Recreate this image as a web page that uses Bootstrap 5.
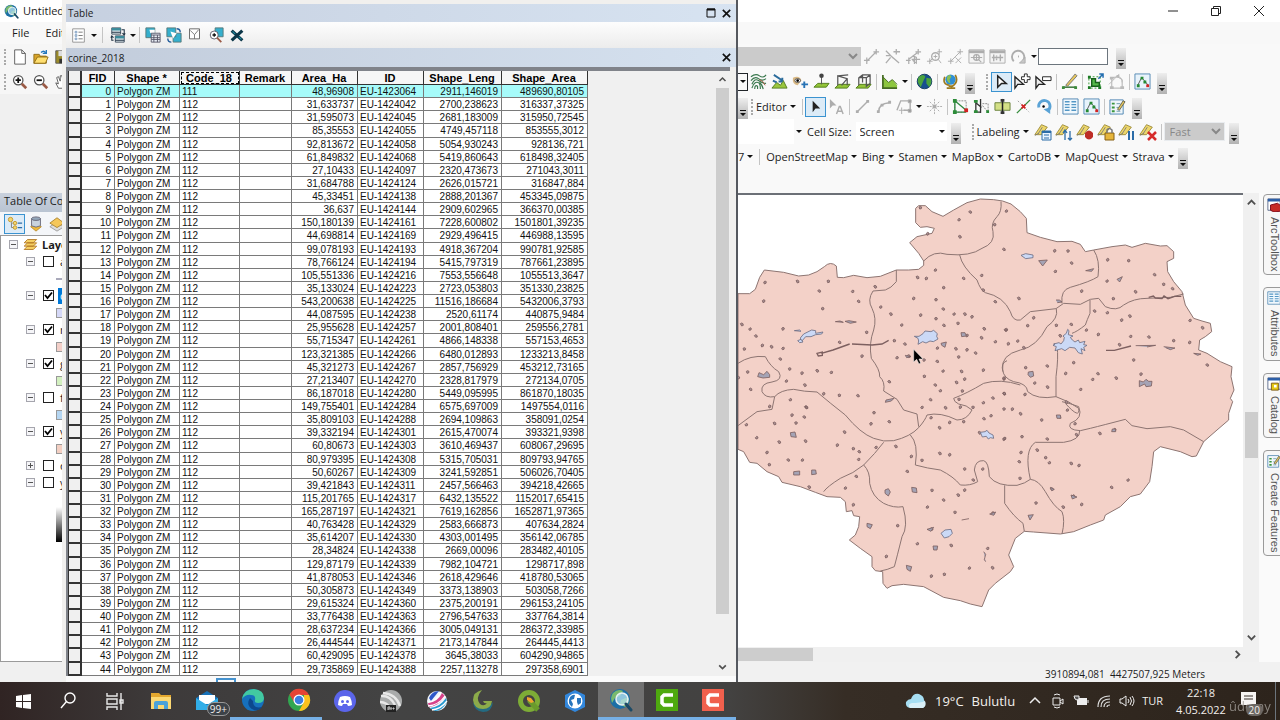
<!DOCTYPE html>
<html lang="en">
<head>
<meta charset="utf-8">
<meta name="viewport" content="width=device-width, initial-scale=1">
<title>Untitled - ArcMap</title>
<link href="https://cdn.jsdelivr.net/npm/bootstrap@5.3.0/dist/css/bootstrap.min.css" rel="stylesheet">
<style>
body{font-family:"Open Sans","Noto Sans",sans-serif;font-size:11px;line-height:16px;color:#1c1c1c;background:#f9f9f9;overflow:hidden}
button,input,select{font:inherit;color:inherit;border-radius:0}
button{background:none;border:0;padding:0}
a{color:inherit;text-decoration:none}
svg{display:block;flex:none}
.workspace{min-height:0}
.faded{opacity:.38;filter:grayscale(1)}
/* main window, left part */
.leftpane{width:62px;background:#f0f0f0}
.titlerow{height:22px;background:#fff}
.menurow{height:22px;background:#f8f8f8}
.leftbar{height:25px;background:#f6f6f6}
.blankbar{height:99px}
.toc-title{height:19px;background:linear-gradient(#c9d1dd,#b9c4d2)}
.toc-tools{height:23px;background:#f4f6f9}
.toc-tree{background:#fff;border:1px solid #9a9a9a;border-right:0;margin-bottom:20px}
.tree-row{height:17px}
.tree-row.child{padding-left:25px;gap:4px}
.fold{width:9px;height:9px;border:1px solid #a5a5ad;background:#f5f5f8;color:#555;display:grid;place-items:center;flex:none}
.tick{appearance:none;width:11px;height:11px;border:1px solid #222;background:#fff;margin:0 0 0 4px;flex:none}
.tick:checked{background:#fff url("data:image/svg+xml,%3Csvg xmlns='http://www.w3.org/2000/svg' viewBox='0 0 9 9'%3E%3Cpath d='M1 4l2.5 3L8 1.5' fill='none' stroke='%23000' stroke-width='1.8'/%3E%3C/svg%3E")}
.layer-name{padding-left:2px}
.layer-name.chosen{background:#0078d7;color:#fff}
.swatch-row{padding-left:55px}
.swatch{width:20px;height:10px;border:1px solid #999;flex:none}
.ramp{margin-left:55px;height:35px;width:20px;background:linear-gradient(#fff,#000)}
/* attribute table window */
.tablewin{width:676px;border-right:2px solid #55585e;padding:4px 0 0 4px;background:#f1f0ee}
.capbar{height:18px;background:linear-gradient(90deg,#c6d0e0,#d7e3f1);font-size:10px;padding:0 4px 0 2px}
.tabletools{height:26px;background:linear-gradient(#fdfdfd,#ececec);padding-left:2px}
.tabbar{height:19px;background:linear-gradient(90deg,#c2ccdb,#d5e1ef);font-size:10px;padding:0 4px 0 2px}
.gridbox{border:solid #80838a;border-width:4px 0 0 2px;margin-right:6px;background:#f0f0f0}
.gridfoot{height:6px;background:#fafafa}
.chip{width:20px;height:4px;border:2px solid #4592cf;border-bottom:0;margin-left:150px}
.attrs{border-collapse:separate;border-spacing:0;table-layout:fixed;width:520px;height:100%;font:10px/11px "Liberation Sans",Arial,sans-serif;color:#111;flex:none}
.attrs td,.attrs th{padding:1px 3px 0 2px;border:solid #7a7a7a;border-width:0 1px 1px 0;background:#fff;white-space:nowrap;overflow:hidden}
.attrs thead th{font-size:11px;line-height:12px;text-align:center;background:#f6f6f6;border-color:#333;color:#000}
.attrs .rowhead{background:#f0f0f0;border-color:#333;border-width:0 2px 2px 1px}
.attrs .numcell{text-align:right}
.attrs .current td{background:#a6fbfa}
.attrs .focused{outline:1px dashed #000;outline-offset:-2px}
.vscroll{width:16px;background:#f0f0f0;color:#555}
.thumb{background:#cdcdcd;width:13px}
.mapthumb{height:46px}
.above{flex:54}
.below{flex:46}
/* main window, right part */
.win-ctl{width:43px;display:grid;place-items:center}
.barrow{height:25px;white-space:nowrap}
.tl{width:21px;height:20px;display:grid;place-items:center;flex:none}
.tl.on{border:1px solid #3b93d0;background:#dcebf7}
.divider{width:1px;height:16px;background:#c4c4c4;margin:0 2px;flex:none}
.gripper{width:2px;height:16px;border-left:2px dotted #aaa;margin:0 3px;flex:none}
.more{width:10px;height:21px;background:linear-gradient(#eee,#b2b2b2);flex:none;display:flex;align-items:end;align-self:end;justify-content:center;padding-bottom:2px}
.caret{width:9px;height:16px;display:grid;place-items:center;flex:none}
.caret::after,.menulink::after{content:"";border:solid transparent;border-width:3px 3px 0;border-top-color:#111}
.menulink{display:flex;align-items:center;gap:3px}
.greybox{background:#cbcbcb;color:#888;height:19px}
.layerpick{width:123px}
.anglebox{width:70px;height:17px}
.rasterbox{width:56px}
.cellpick{appearance:none;width:82px;height:19px}
.fastpick{width:61px;padding-left:1px}
.basemaps{gap:5px}
.spacerbar{height:24px}
.mapframe{background:#fff;border-top:2px solid #6c7077}
.hscroll{height:15px;background:#f0f0f0}
.hthumb{width:75px;height:13px;background:#cdcdcd}
.status{height:20px;background:#f1f1f1;padding:3px 75px 0 0;font-size:10px}
.dock{width:21px;padding:1px 0 0 4px;gap:12px;background:#fafafa}
.docktab{writing-mode:vertical-rl;width:22px;border:1px solid #9a9a9a;border-radius:4px;font:11px/15px "Liberation Sans",Arial,sans-serif;color:#555;padding:3px 0;gap:5px;display:flex;align-items:center;background:#f7f7f7}
.docktab svg{width:14px;height:14px}
/* task bar */
.taskbar{height:38px;background:linear-gradient(90deg,#302423,#3d3a3a 12%,#434343 30%,#434241 57%,#362d25 66%,#2d241c);color:#f2efec}
.task{width:46px;display:grid;place-items:center;position:relative;flex:none}
.task svg{width:24px;height:24px}
.task.open{border-bottom:3px solid #76b0e6}
.task.active{background:#717171}
.count{position:absolute;right:0;bottom:4px;font-size:10px;line-height:12px;background:#3c4248;border:1px solid #999;border-radius:8px;padding:0 2px}
.weather{font-size:13px}
.traygap{width:23px;display:grid;place-items:center}
.traygap svg{width:16px;height:16px}
.clock{line-height:17px;width:52px}
.notice{width:48px;position:relative}
.watermark{position:absolute;left:2px;bottom:6px;font-size:13px;color:#a09b96;opacity:.8}
.bubble{position:absolute;right:12px;bottom:4px;font-size:10px;line-height:12px;background:#6c6762;border-radius:8px;padding:0 3px}
</style>
</head>
<body>
<svg width="0" height="0" class="position-absolute" aria-hidden="true">
<defs>
<symbol id="globe" viewBox="0 0 24 24"><circle cx="11" cy="11" r="10" fill="#1c6fa6"/><path d="M4 5q5-5 10-2l-3 5-5 2-3 5q-2-6 1-10zM12 12l7-3q2 6-3 10l-5-3z" fill="#79b96d"/><circle cx="13" cy="11" r="6" fill="#b6e2ef" fill-opacity=".75" stroke="#e6f0f2" stroke-width="1.6"/><path d="M17 16l5 6" stroke="#1b4a66" stroke-width="3" stroke-linecap="round"/></symbol>
<symbol id="page" viewBox="0 0 18 18"><path d="M3 1h8l4 4v12H3z" fill="#fff" stroke="#555"/><path d="M11 1v4h4" fill="none" stroke="#555"/></symbol>
<symbol id="folder" viewBox="0 0 18 18"><path d="M1 6h6l1 2h7v8H1z" fill="#d9a429" stroke="#8d6b15"/><path d="M1 16l4-7h12l-3 7z" fill="#ffdf70" stroke="#8d6b15"/><path d="M9 4q3-3 5 0M15 1v4h-4" fill="none" stroke="#2477bd" stroke-width="1.5"/></symbol>
<symbol id="disk" viewBox="0 0 18 18"><path d="M2 2h14v14H2z" fill="#9b8b2a" stroke="#555"/><path d="M5 2h8v6H5z" fill="#ddd"/><path d="M6 11h7v5H6z" fill="#333"/></symbol>
<symbol id="zin" viewBox="0 0 18 18"><circle cx="7" cy="7" r="5.3" fill="#fff" stroke="#555" stroke-width="1.4"/><path d="M4 7h6M7 4v6" stroke="#111" stroke-width="2"/><path d="M11 11l5 5" stroke="#9a5a46" stroke-width="3"/></symbol>
<symbol id="zout" viewBox="0 0 18 18"><circle cx="7" cy="7" r="5.3" fill="#fff" stroke="#555" stroke-width="1.4"/><path d="M4 7h6" stroke="#111" stroke-width="2"/><path d="M11 11l5 5" stroke="#9a5a46" stroke-width="3"/></symbol>
<symbol id="hand" viewBox="0 0 18 18"><path d="M5 16l-3-6 3 1-2-7 2-1 2 5 0-6 2 0 1 6 2-5 2 1-2 7v5z" fill="#fff" stroke="#555"/></symbol>
<symbol id="toc1" viewBox="0 0 18 18"><circle cx="4" cy="4" r="2.5" fill="#f4d46d" stroke="#c1962b"/><path d="M5 7v6h3M6 8h3" stroke="#777" fill="none"/><circle cx="9" cy="8" r="2" fill="#f4d46d" stroke="#c1962b"/><circle cx="9" cy="13" r="2" fill="#f4d46d" stroke="#c1962b"/><path d="M12 8h5M12 13h5" stroke="#2f6ea8" stroke-width="1.5"/></symbol>
<symbol id="toc2" viewBox="0 0 18 18"><path d="M3 12l6-3 6 3-6 5z" fill="#f0b93b" stroke="#b98a26"/><path d="M4 3v8q5 3 10 0V3z" fill="#c9d3de" stroke="#667"/><ellipse cx="9" cy="3" rx="5" ry="2" fill="#93a6ba" stroke="#667"/></symbol>
<symbol id="toc3" viewBox="0 0 18 18"><path d="M1 12l8-5 8 5-8 5z" fill="#ddd" stroke="#999"/><path d="M1 8l8-6 8 6-8 5z" fill="#f5c75a" stroke="#a9822d"/></symbol>
<symbol id="layers" viewBox="0 0 18 18"><path d="M2 15l4-4h11l-4 4zM2 11l4-4h11l-4 4zM2 7l4-4h11l-4 4z" fill="#f5cf63" stroke="#b0741f"/></symbol>
<symbol id="optlist" viewBox="0 0 18 18"><path d="M2 1h14v16H2z" fill="#fff" stroke="#888"/><path d="M5 4h2v2H5zM5 8h2v2H5zM5 12h2v2H5z" fill="none" stroke="#6f93bb"/><path d="M9 5h5M9 9h5M9 13h5" stroke="#666"/></symbol>
<symbol id="related" viewBox="0 0 18 18"><path d="M2 1h10v7H2zM6 10h10v7H6z" fill="#e5eef2" stroke="#345"/><path d="M2 1h10v3H2zM6 10h10v3H6z" fill="#3c8b9b"/><path d="M2 6h10M6 15h10M13 3h3v5M14 7l2 2 1-2M4 15H2v-5M1 12l1-2 2 2" stroke="#234" fill="none" stroke-width="1.2"/></symbol>
<symbol id="selattr" viewBox="0 0 18 18"><path d="M1 1h10v11H1z" fill="#35afcd" stroke="#577"/><path d="M5 3h6v4H6z" fill="#fff"/><path d="M7 7h10v10H7z" fill="#e9edf4" stroke="#556"/><path d="M7 9h10M7 12h10M7 14h10M10 9v8M14 9v8" stroke="#556"/></symbol>
<symbol id="switch" viewBox="0 0 18 18"><path d="M1 1h10v10H1zM8 7h9v10H8z" fill="#35afcd" stroke="#577"/><path d="M5 5l7 2-4 6z" fill="#fff"/><path d="M12 2q4 0 4 4M2 13q0 4 4 4" stroke="#245e9c" stroke-width="1.6" fill="none"/></symbol>
<symbol id="clearsel" viewBox="0 0 18 18"><path d="M3 1h12v12H3z" fill="#fff" stroke="#555"/><path d="M4 3l5 5 5-6M9 8v5" fill="none" stroke="#666"/></symbol>
<symbol id="zoomsel" viewBox="0 0 18 18"><path d="M8 1h9v10H8z" fill="#35afcd" stroke="#577"/><circle cx="7" cy="9" r="4.5" fill="#fff" stroke="#556"/><path d="M5 9h4M7 7v4" stroke="#111" stroke-width="1.5"/><path d="M10 12l5 5" stroke="#9a5a46" stroke-width="2"/></symbol>
<symbol id="delx" viewBox="0 0 18 18"><path d="M3 4l12 11M15 4L3 15" stroke="#0b3547" stroke-width="3.6"/><path d="M4 5l3 3M11 11l3 3" stroke="#1c8ca3" stroke-width="1.2"/></symbol>
<symbol id="x" viewBox="0 0 12 12"><path d="M2 2l8 8M10 2l-8 8" stroke="#111" stroke-width="1.8"/></symbol>
<symbol id="max" viewBox="0 0 12 12"><path d="M2 2h8v8H2z" fill="none" stroke="#111"/><path d="M2 2.5h8" stroke="#111" stroke-width="2"/></symbol>
<symbol id="vert" viewBox="0 0 18 18"><path d="M4 14L14 4M1 13h6M4 10v7M11 4h6M14 1v6" stroke="#333" stroke-width="1.3"/></symbol>
<symbol id="vertw" viewBox="0 0 18 18"><path d="M2 3l8 8M2 16l5-6M10 4h7M13 1v6M8 9l8 7M2 8h5" stroke="#333" stroke-width="1.4"/></symbol>
<symbol id="verth" viewBox="0 0 18 18"><path d="M1 13h5M4 10v7M11 4h6M14 1v6M4 12l9-7M8 8l4 2v6l-4-3M7 12h9M10 9v8" stroke="#333" stroke-width="1.3" fill="none"/></symbol>
<symbol id="vertz" viewBox="0 0 18 18"><path d="M1 14h6M4 11v6M12 4h5M14 1v6M4 14l3-3" stroke="#333"/><circle cx="10" cy="9" r="4" fill="none" stroke="#333" stroke-width="1.4"/><path d="M8 9h4M10 7v4M13 12l3 4" stroke="#333"/></symbol>
<symbol id="vertx" viewBox="0 0 18 18"><path d="M4 14L14 4M1 14h6M4 11v6M11 4h6M14 1v6M9 10l6 6M15 10l-6 6" stroke="#333"/></symbol>
<symbol id="winz" viewBox="0 0 18 18"><path d="M1 2h16v14H1z" fill="#eee" stroke="#333"/><path d="M1 4h16" stroke="#333" stroke-width="3"/><circle cx="9" cy="10" r="3" fill="none" stroke="#333" stroke-width="1.4"/><path d="M3 10h12M9 7v6M11 12l3 3" stroke="#333" stroke-width="1.2"/></symbol>
<symbol id="wint" viewBox="0 0 18 18"><path d="M1 2h16v14H1z" fill="#eee" stroke="#333"/><path d="M1 4h16" stroke="#333" stroke-width="3"/><path d="M3 10h12M5 7v7M12 7v7M8 8v1M8 11v2" stroke="#333" stroke-width="1.5"/></symbol>
<symbol id="rot" viewBox="0 0 18 18"><path d="M4 14A6.5 6.5 0 1 1 14 13" fill="none" stroke="#333" stroke-width="2"/><path d="M10 16h6v-6zM9 8v2" fill="#777" stroke="#333"/></symbol>
<symbol id="contour" viewBox="0 0 18 18"><path d="M1 4q5-4 9-1t7-1M1 8q4-5 8-2t8 0M2 12q3-7 7-4t8 3M2 16q3-9 8-5 1 2 1 6M14 17q-1-5-4-7M5 17q0-5 3-3v3" fill="none" stroke="#39784d" stroke-width="1.2"/><path d="M10 7q4 1 6 6" fill="none" stroke="#a4573e"/></symbol>
<symbol id="steep" viewBox="0 0 18 18"><path d="M1 16l5-6 4 3 3-5 4 8z" fill="#9ac63d" stroke="#567d22"/><path d="M3 2l9 6M12 9V5M12 9H8M2 8l4 2" stroke="#2b6c9c" stroke-width="2" fill="none"/></symbol>
<symbol id="sight" viewBox="0 0 18 18"><path d="M1 5q7-3 9 3l-4 5q-6-1-5-8z" fill="#d9b985"/><ellipse cx="6" cy="8" rx="3" ry="2" fill="#fff" stroke="#555"/><circle cx="6" cy="8" r="1.4"/><path d="M10 12h7M13 9v7" stroke="#2873b5" stroke-width="2"/></symbol>
<symbol id="pin3d" viewBox="0 0 18 18"><path d="M1 15l4-4h12l-3 4z" fill="#93c438" stroke="#507c18"/><path d="M9 3v9" stroke="#555"/><circle cx="9" cy="3" r="2.4" fill="#444"/></symbol>
<symbol id="line3d" viewBox="0 0 18 18"><path d="M1 16l4-4h12l-3 4z" fill="#93c438" stroke="#507c18"/><path d="M4 13V3l10 3v7M4 3l11-1M14 6L8 13" stroke="#555" fill="none" stroke-width="1.3"/></symbol>
<symbol id="poly3d" viewBox="0 0 18 18"><path d="M1 16l4-4h12l-3 4z" fill="#93c438" stroke="#507c18"/><path d="M4 13V5l4-3h8v9l-4 3V5l4-3M4 5h8M8 2v8" stroke="#555" fill="none" stroke-width="1.3"/></symbol>
<symbol id="chart" viewBox="0 0 18 18"><path d="M2 4l6 6 4-3 5 6v3H2z" fill="#8dc63f"/><path d="M2 2v14h15" stroke="#456b23" stroke-width="1.8" fill="none"/><path d="M2 4l6 6 4-3 5 5" stroke="#456b23" fill="none"/></symbol>
<symbol id="earth" viewBox="0 0 18 18"><circle cx="9" cy="9" r="7.7" fill="#17508e" stroke="#153a62"/><path d="M3 4q5-4 7 0l-2 4-3 7Q0 9 3 4zM11 5l5 1q1 5-2 9l-3-4z" fill="#4ba43e"/></symbol>
<symbol id="scene" viewBox="0 0 18 18"><circle cx="9" cy="7" r="5.5" fill="#2f8fd4"/><path d="M6 3q3-2 4 1L8 7l1 4Q3 9 6 3z" fill="#8cc152"/><path d="M14 2q4 7-3 12H7M10 13v3M5 16h9M3 4Q0 12 8 13" stroke="#9c7b20" fill="none" stroke-width="1.8"/></symbol>
<symbol id="arr" viewBox="0 0 18 18"><path d="M6 3v12l3-4 5 0z" fill="#222"/></symbol>
<symbol id="arrh" viewBox="0 0 18 18"><path d="M5 3v12l4-4 5 0z" fill="#fff" stroke="#222" stroke-width="1.6"/></symbol>
<symbol id="arrp" viewBox="0 0 18 18"><path d="M1 4v12l3-4 6 0z" fill="#eee" stroke="#222" stroke-width="1.4"/><path d="M11 1h3v3h3v3h-3v3h-3V7H8V4h3z" fill="#fff" stroke="#222"/></symbol>
<symbol id="arrm" viewBox="0 0 18 18"><path d="M1 4v12l3-4 6 0z" fill="#eee" stroke="#222" stroke-width="1.4"/><path d="M8 4h9v4H8z" fill="#fff" stroke="#222"/></symbol>
<symbol id="arra" viewBox="0 0 18 18"><path d="M2 1v10l3-3h4z" fill="#333"/><path d="M9 17l3-8h1l3 8M10 14h5" stroke="#333" stroke-width="1.5" fill="none"/></symbol>
<symbol id="pencil" viewBox="0 0 18 18"><path d="M2 15h14" stroke="#2c6d2c" stroke-width="1.5"/><path d="M5 13L15 1l2 2L7 14z" fill="#e7c75b" stroke="#777"/><path d="M1 14h3v3H1zM14 14h3v3h-3z" fill="#3c8c3c"/></symbol>
<symbol id="bbox" viewBox="0 0 18 18"><path d="M2 4h12v12H2z" fill="none" stroke="#393" stroke-dasharray="2"/><path d="M5 6h4v4h4v4H5z" fill="#54b948" stroke="#17611a" stroke-width="1.5"/><path d="M1 3h3v3H1zM12 14h3v3h-3zM1 14h3v3H1z" fill="#1d7b24"/><path d="M12 6l5-5M13 1h4v4" stroke="#236eb0" stroke-width="1.6" fill="none"/></symbol>
<symbol id="topo" viewBox="0 0 18 18"><path d="M4 5v11h11V7L10 4z" fill="none" stroke="#333"/><path d="M2 14h4v3H2zM13 14h4v3h-4zM2 4h4v3H2zM9 2h3v3H9z" fill="#555"/><path d="M1 12L12 1M10 4q5 0 5 6" stroke="#555" fill="none"/></symbol>
<symbol id="sketch" viewBox="0 0 18 18"><path d="M1 1h16v16H1z" fill="#e8f3fb" stroke="#568ab5"/><path d="M4 13L8 5l3 3 4 5" fill="none" stroke="#555"/><path d="M3 12h3v3H3zM7 4h3v3H7zM10 8h3v3h-3z" fill="#258a33"/><path d="M13 12h3v3h-3z" fill="#d32222"/></symbol>
<symbol id="seg" viewBox="0 0 18 18"><path d="M4 14L14 4" stroke="#333" stroke-width="1.5"/><path d="M2 13h3v3H2zM13 2h3v3h-3z" fill="#333"/></symbol>
<symbol id="arc" viewBox="0 0 18 18"><path d="M4 14q0-8 11-9" fill="none" stroke="#333" stroke-width="1.5"/><path d="M2 13h3v3H2zM6 6h3v3H6zM14 3h3v3h-3z" fill="#333"/></symbol>
<symbol id="polyp" viewBox="0 0 18 18"><path d="M1 13L5 3h10v10H8" fill="none" stroke="#333" stroke-width="1.5"/><path d="M6 10v7M3 13h7M13 2h3v3h-3zM13 12h3v3h-3z" stroke="#333"/></symbol>
<symbol id="burst" viewBox="0 0 18 18"><path d="M9 1v5M9 12v5M1 9h5M12 9h5M4 4l3 3M14 4l-3 3M4 14l3-3M14 14l-3-3" stroke="#333" stroke-dasharray="2 1"/><path d="M7 7h4v4H7z" fill="#333"/></symbol>
<symbol id="resh" viewBox="0 0 18 18"><path d="M3 3v12h12V3z" fill="none" stroke="#888" stroke-dasharray="2 1"/><path d="M3 3l12 10M3 3v12h12" stroke="#384" fill="none" stroke-width="1.4"/><path d="M1 1h4v4H1zM1 13h4v4H1z" fill="#2d8c39"/><path d="M13 11h4v4h-4z" fill="#d32222"/></symbol>
<symbol id="splitp" viewBox="0 0 18 18"><path d="M3 3v12h5M8 1v15M3 5l6 5" stroke="#333" fill="none" stroke-width="1.4"/><path d="M10 8l6 7M10 6h6v8" stroke="#888" stroke-dasharray="2 1" fill="none"/><path d="M1 2h4v3H1zM1 13h4v3H1zM14 13h3v3h-3z" fill="#2d8c39"/></symbol>
<symbol id="cut" viewBox="0 0 18 18"><path d="M1 5h16v8H1z" fill="#d4e086" stroke="#69813b"/><path d="M9 1v16" stroke="#222" stroke-width="1.6"/><path d="M7 1h4v3H7zM7 14h4v3H7z" fill="#333"/></symbol>
<symbol id="splitl" viewBox="0 0 18 18"><path d="M2 16L16 2" stroke="#368c3d" stroke-width="1.4"/><path d="M3 3l12 12" stroke="#999" stroke-dasharray="2"/><path d="M7 7l4 4M11 7l-4 4" stroke="#d32222" stroke-width="1.7"/></symbol>
<symbol id="rotb" viewBox="0 0 18 18"><path d="M3 10A6 6 0 1 1 13 13" fill="none" stroke="#5aa3d6" stroke-width="3"/><path d="M8 12l7 5 0-7z" fill="#5aa3d6"/><circle cx="8" cy="9" r="1.3"/></symbol>
<symbol id="attrt" viewBox="0 0 18 18"><path d="M1 1h16v16H1z" fill="#f1f8fd" stroke="#4f86b2"/><path d="M3 4h5M3 7h5M3 10h5M3 13h5M10 4h5M10 7h5M10 10h5M10 13h5" stroke="#5497c5" stroke-width="1.4"/></symbol>
<symbol id="cfeat" viewBox="0 0 18 18"><path d="M1 2h14v15H1z" fill="#f0f6fb" stroke="#4f86b2"/><path d="M3 5h3v2H3zM3 9h3v2H3zM3 13h3v2H3z" fill="#3a963d"/><path d="M8 6h4M8 10h2M8 14h4" stroke="#69a"/><path d="M9 12l6-9 2 1-6 9z" fill="#e7c75b" stroke="#665"/></symbol>
<symbol id="tag" viewBox="0 0 18 18"><path d="M1 14L9 2l7 3-7 9z" fill="#edd66a" stroke="#94822c"/><path d="M5 13l5-8M1 15l5-3" stroke="#777"/></symbol>
<symbol id="up" viewBox="0 0 12 12"><path d="M2 8l4-4 4 4" fill="none" stroke="#505050" stroke-width="2"/></symbol>
<symbol id="down" viewBox="0 0 12 12"><path d="M2 4l4 4 4-4" fill="none" stroke="#505050" stroke-width="2"/></symbol>
<symbol id="right" viewBox="0 0 12 12"><path d="M4 2l4 4-4 4" fill="none" stroke="#505050" stroke-width="2"/></symbol>
<symbol id="moreg" viewBox="0 0 8 8"><path d="M1 1h6v1H1zM1 4h6L4 7z" fill="#111"/></symbol>
</defs>
</svg>

<div class="vh-100 d-flex flex-column">
<div class="workspace flex-grow-1 d-flex">

<!-- left edge of the main window -->
<aside class="leftpane d-flex flex-column flex-shrink-0 overflow-hidden text-nowrap">
  <div class="titlerow d-flex align-items-center gap-1 ps-1 flex-shrink-0"><svg width="15" height="15"><use href="#globe"/></svg>Untitled</div>
  <nav class="menurow d-flex align-items-center gap-3 flex-shrink-0 ps-2"><a class="ms-1" href="#">File</a><a href="#">Edit</a></nav>
  <div class="leftbar d-flex align-items-center flex-shrink-0"><span class="gripper ms-1"></span><button class="tl" aria-label="New"><svg width="16" height="16"><use href="#page"/></svg></button><button class="tl" aria-label="Open"><svg width="16" height="16"><use href="#folder"/></svg></button><button class="tl" aria-label="Save"><svg width="16" height="16"><use href="#disk"/></svg></button></div>
  <div class="leftbar d-flex align-items-center flex-shrink-0"><span class="gripper ms-1"></span><button class="tl" aria-label="Zoom in"><svg width="16" height="16"><use href="#zin"/></svg></button><button class="tl" aria-label="Zoom out"><svg width="16" height="16"><use href="#zout"/></svg></button><button class="tl" aria-label="Pan"><svg width="16" height="16"><use href="#hand"/></svg></button></div>
  <div class="blankbar flex-shrink-0"></div>
  <div class="toc-title ps-1 flex-shrink-0">Table Of Contents</div>
  <div class="toc-tools d-flex align-items-center ps-1 flex-shrink-0"><button class="tl on" aria-label="List by drawing order"><svg width="16" height="16"><use href="#toc1"/></svg></button><button class="tl" aria-label="List by source"><svg width="16" height="16"><use href="#toc2"/></svg></button><button class="tl" aria-label="List by visibility"><svg width="16" height="16"><use href="#toc3"/></svg></button></div>
  <div class="toc-tree flex-grow-1" id="tree">
    <div class="tree-row d-flex align-items-center ps-2 gap-1"><button class="fold" aria-label="Collapse"><svg width="5" height="5"><path d="M0 2.5h5" stroke="currentColor"/></svg></button><svg width="16" height="15"><use href="#layers"/></svg><b>Layers</b></div>
  </div>
</aside>

<!-- attribute table -->
<section class="tablewin d-flex flex-column flex-shrink-0">
  <div class="capbar d-flex align-items-center flex-shrink-0"><span class="me-auto">Table</span><button class="me-1" aria-label="Maximize"><svg width="12" height="12"><use href="#max"/></svg></button><button aria-label="Close"><svg width="11" height="11"><use href="#x"/></svg></button></div>
  <div class="tabletools d-flex align-items-center flex-shrink-0">
    <button class="tl" aria-label="Table options"><svg width="15" height="15"><use href="#optlist"/></svg></button><span class="caret"></span><span class="divider mx-1"></span><button class="tl" aria-label="Related tables"><svg width="16" height="16"><use href="#related"/></svg></button><span class="caret"></span><span class="divider"></span>
    <button class="tl" aria-label="Select by attributes"><svg width="16" height="16"><use href="#selattr"/></svg></button><button class="tl" aria-label="Switch selection"><svg width="16" height="16"><use href="#switch"/></svg></button><button class="tl" aria-label="Clear selection"><svg width="15" height="15"><use href="#clearsel"/></svg></button><button class="tl" aria-label="Zoom to selected"><svg width="16" height="16"><use href="#zoomsel"/></svg></button><button class="tl" aria-label="Delete selected"><svg width="16" height="16"><use href="#delx"/></svg></button>
  </div>
  <div class="tabbar d-flex align-items-center flex-shrink-0"><span class="me-auto">corine_2018</span><button aria-label="Close tab"><svg width="11" height="11"><use href="#x"/></svg></button></div>
  <div class="gridbox flex-grow-1 d-flex">
    <table class="attrs">
      <colgroup><col width="14"><col width="33"><col width="65"><col width="60"><col width="52"><col width="66"><col width="66"><col width="78"><col width="86"></colgroup>
      <thead><tr><th class="rowhead"></th><th>FID</th><th>Shape *</th><th class="focused">Code_18</th><th>Remark</th><th>Area_Ha</th><th>ID</th><th>Shape_Leng</th><th>Shape_Area</th></tr></thead>
      <tbody id="rows"></tbody>
    </table>
    <div class="vscroll ms-auto d-flex flex-column align-items-center"><svg class="my-1" width="11" height="9"><use href="#up"/></svg><div class="thumb flex-grow-1 mb-5"></div><svg class="mb-1" width="11" height="10"><use href="#down"/></svg></div>
  </div>
  <div class="gridfoot d-flex align-items-end flex-shrink-0"><div class="chip"></div></div>
</section>

<!-- right part of the main window -->
<main class="flex-grow-1 d-flex flex-column overflow-hidden">
  <div class="titlerow d-flex justify-content-end flex-shrink-0">
    <button class="win-ctl" aria-label="Minimize"><svg width="12" height="12"><path d="M1 6h10" stroke="#222"/></svg></button>
    <button class="win-ctl" aria-label="Restore"><svg width="12" height="12"><path d="M1.5 3.5h7v7h-7zM3.5 3V1.5h7v7H9" fill="none" stroke="#222"/></svg></button>
    <button class="win-ctl" aria-label="Close"><svg width="12" height="12"><path d="M1 1l10 10M11 1L1 11" stroke="#222"/></svg></button>
  </div>
  <div class="menurow flex-shrink-0"></div>
  <div id="bars" class="flex-shrink-0"></div>
  <div class="spacerbar flex-shrink-0"></div>
  <div class="d-flex flex-grow-1 overflow-hidden">
    <div class="flex-grow-1 d-flex flex-column overflow-hidden">
      <div class="d-flex flex-grow-1 overflow-hidden">
        <div class="mapframe flex-grow-1 overflow-hidden"><svg id="map" width="100%" height="100%" viewBox="3 15 1518 1356" preserveAspectRatio="xMinYMin slice"></svg></div>
        <div class="vscroll d-flex flex-column align-items-center pt-1 pb-1"><svg width="11" height="11"><use href="#up"/></svg><div class="above"></div><div class="thumb mapthumb"></div><div class="below"></div><svg width="11" height="11"><use href="#down"/></svg></div>
      </div>
      <div class="hscroll d-flex align-items-center flex-shrink-0"><div class="hthumb me-auto"></div><svg class="me-3" width="11" height="11"><use href="#right"/></svg></div>
    </div>
    <nav class="dock d-flex flex-column flex-shrink-0">
      <button class="docktab"><svg viewBox="0 0 16 16"><path d="M1 1h14v13H1z" fill="#fff" stroke="#568"/><path d="M1 1h14v3H1z" fill="#2d5fa7"/><path d="M4 8l8-2 4 3v6l-8 1-4-2z" fill="#c62b27" stroke="#701"/></svg>ArcToolbox</button>
      <button class="docktab"><svg><use href="#attrt"/></svg>Attributes</button>
      <button class="docktab"><svg viewBox="0 0 16 16"><path d="M1 1h14v13H1z" fill="#fff" stroke="#568"/><path d="M1 1h14v3H1z" fill="#2d5fa7"/><path d="M5 7h8v8H5z" fill="#e6c915" stroke="#751"/><path d="M8 9h3v3H8z" fill="#fff"/></svg>Catalog</button>
      <button class="docktab"><svg><use href="#cfeat"/></svg>Create Features</button>
    </nav>
  </div>
  <div class="status d-flex align-items-center justify-content-end flex-shrink-0"><span>3910894,081&nbsp; 4427507,925 Meters</span></div>
</main>
</div>

<footer class="taskbar d-flex flex-shrink-0">
  <button class="task" aria-label="Start"><svg viewBox="0 0 24 24"><path d="M5 7l6-1v6H5zM12 6l8-1v7h-8zM5 13h6v6l-6-1zM12 13h8v7l-8-1z" fill="#fff"/></svg></button>
  <button class="task" aria-label="Search"><svg viewBox="0 0 24 24" fill="none" stroke="#fff" stroke-width="1.4"><circle cx="13" cy="9" r="5"/><path d="M9.500 12.500L4 19"/></svg></button>
  <button class="task" aria-label="Task view"><svg viewBox="0 0 24 24" fill="none" stroke="#e8e8e8" stroke-width="1.4"><path d="M4 4v3h10V4M4 10h10v5H4zM4 21v-3h10v3M18 4v17M17 11h3v3h-3z"/></svg></button>
  <button class="task" aria-label="File Explorer"><svg viewBox="0 0 24 24"><path d="M2 4h8l2 2h10v14H2z" fill="#e3a72e"/><path d="M2 8h20v12H2z" fill="#fbd873"/><path d="M5 20v-6q0-2 2-2h10q2 0 2 2v6h-4v-4H9v4z" fill="#4ba2d8"/></svg></button>
  <button class="task" aria-label="Mail"><svg viewBox="0 0 24 24"><path d="M1 9l11-7 11 7v12H1z" fill="#1671b8"/><path d="M4 6h16v9H4z" fill="#fff"/><path d="M1 9l11 7 11-7v12H1z" fill="#31aee8"/></svg><span class="count">99+</span></button>
  <button class="task open" aria-label="Edge"><svg viewBox="0 0 24 24"><circle cx="12" cy="12" r="11" fill="#1670bd"/><path d="M1 11Q3 1 13 1q10 1 10 9 0 5-6 5-4 0-3-3 1-5-4-5-5-1-9 4z" fill="#42c9a1"/><path d="M9 10q-5 8 4 12 5 1 8-3-9 2-9-6z" fill="#0c488d"/></svg></button>
  <button class="task open" aria-label="Chrome"><svg viewBox="0 0 24 24"><circle cx="12" cy="12" r="11" fill="#31a650"/><path d="M2.500 6.500A11 11 0 0 1 22 7H12l-5 7z" fill="#e54335"/><path d="M22 7a11 11 0 0 1-10 16l5-9V7z" fill="#fbc11d"/><circle cx="12" cy="12" r="5.500" fill="#fff"/><circle cx="12" cy="12" r="4.300" fill="#3c7de0"/></svg></button>
  <button class="task" aria-label="Discord"><svg viewBox="0 0 24 24"><circle cx="12" cy="12" r="11" fill="#5b65ea"/><path d="M7 8q5-2 10 0 2 4 2 8-2 1-4 1l-1-2h-4l-1 2q-2 0-4-1 0-4 2-8z" fill="#fff"/><circle cx="9.500" cy="12.500" r="1.500" fill="#5b65ea"/><circle cx="14.500" cy="12.500" r="1.500" fill="#5b65ea"/></svg></button>
  <button class="task" aria-label="Google Earth Pro"><svg viewBox="0 0 24 24"><circle cx="12" cy="12" r="11" fill="#a9abab"/><path d="M2 7q9-1 14 9M4 4q13 1 17 13M1 13q7 0 11 7" stroke="#e8e8e8" stroke-width="2.500" fill="none"/><path d="M7 16h10v7H7z" fill="#222"/><path d="M9 21v-3h2v2H9M12 21v-2h1M14 19h1v1h-1z" stroke="#ccc" fill="none"/></svg></button>
  <button class="task" aria-label="Orbit browser"><svg viewBox="0 0 24 24"><circle cx="12" cy="12" r="10" fill="#f0f5fa"/><path d="M4 9q3-7 10-7L6 12z" fill="#2e58c9"/><path d="M3 14q10-1 14-10l3 3Q14 17 4 18z" fill="#d6428a"/><path d="M5 19q10-1 16-10l1 4q-5 9-12 9z" fill="#2598cf"/><path d="M3 13q8 0 13-10M3 17q11-1 17-10M7 21q9-1 15-9" stroke="#fff" stroke-width="1.300" fill="none"/></svg></button>
  <button class="task" aria-label="GIS viewer"><svg viewBox="0 0 24 24"><path d="M2 13q1 9 10 10 9 0 10-10-5 7-11 5Q4 17 2 13z" fill="#246b82"/><path d="M11 1Q2 3 2 11q1 9 10 9 8 0 9-8H12q1 3 4 2-3 4-7 1-5-6 2-14z" fill="#8cab4a"/></svg></button>
  <button class="task" aria-label="QGIS"><svg viewBox="0 0 24 24"><circle cx="12" cy="12" r="8.500" fill="none" stroke="#7dac36" stroke-width="5"/><path d="M12 11l9 10" stroke="#6a9a2c" stroke-width="5"/><path d="M10 8l4 1 3 4-3 1-4-3z" fill="#f0a431"/></svg></button>
  <button class="task" aria-label="Globe app"><svg viewBox="0 0 24 24"><path d="M12 1l10 5v12l-10 5-10-5V6z" fill="#3287dc"/><circle cx="12" cy="12" r="7.500" fill="#fff"/><path d="M7 8q3-3 5-2l-1 4-3 1 2 4-1 3q-5-4-2-10zM14 9l4 0v5l-3 2-1-3z" fill="#2875bd"/></svg></button>
  <button class="task open active" aria-label="ArcMap"><svg><use href="#globe"/></svg></button>
  <button class="task open" aria-label="Camtasia"><svg viewBox="0 0 24 24"><path d="M1 1h22v22H1z" fill="#4ea90f"/><path d="M18 7H9L7 9v6l2 2h9" fill="none" stroke="#fff" stroke-width="3.500"/></svg></button>
  <button class="task open" aria-label="Camtasia Recorder"><svg viewBox="0 0 24 24"><path d="M1 1h22v22H1z" fill="#f0604d"/><path d="M18 7H9L7 9v6l2 2h9" fill="none" stroke="#fff" stroke-width="3.500"/></svg></button>
  <div class="ms-auto d-flex align-items-center">
    <svg width="22" height="18" viewBox="0 0 22 18"><path d="M5 16q-5-1-4-6 2-3 5-3 2-6 8-5 5 2 5 6 3 4-1 8z" fill="#a6def2"/><path d="M5 16q-3-4 2-5 8 0 13-2 2 5-2 7z" fill="#d9f0f8"/></svg>
    <a class="ms-2 me-2 d-flex gap-2 weather" href="#"><span>19°C</span><span>Bulutlu</span></a>
    <span class="traygap"><svg viewBox="0 0 16 16"><path d="M3 10l5-5 5 5" fill="none" stroke="#eee" stroke-width="1.500"/></svg></span>
    <span class="traygap"><svg viewBox="0 0 16 16" fill="none" stroke="#eee"><path d="M3 5h7v7H3zM10 8l3-2v5l-3-2M4 2q3-2 6 0M4 14q3 2 6 0"/></svg></span>
    <span class="traygap"><svg viewBox="0 0 16 16"><path d="M4 5h10v7H4z" fill="#eee"/><path d="M15 7v3M1 3h5v3q-2 2-4 0z" stroke="#eee" fill="#555"/></svg></span>
    <span class="traygap"><svg viewBox="0 0 16 16" fill="none" stroke="#ddd" stroke-width="1.200"><path d="M2 14Q2 3 14 3M5 14q0-8 9-8M8 14q0-5 6-5M11 14q0-2 3-2"/></svg></span>
    <span class="traygap"><svg viewBox="0 0 16 16" fill="none" stroke="#eee"><path d="M1 6h2l4-3v10l-4-3H1zM9 6q2 2 0 4M11 4q3 4 0 8M13 3q4 5 0 10"/></svg></span>
    <span class="mx-1">TUR</span>
    <div class="clock text-center ms-2"><div>22:18</div><div>4.05.2022</div></div>
    <div class="notice align-self-stretch"><svg class="position-absolute bottom-0 end-0 me-3 mb-2" width="20" height="22" viewBox="0 0 20 22"><path d="M2 2h15v13h-4l-3 4v-4H2z" fill="#f7f5f3"/><path d="M5 6h9M5 9h9" stroke="#38302a"/></svg><span class="watermark">ûdemy</span><span class="bubble">20</span></div>
    <div class="border-start border-secondary align-self-stretch ps-1"></div>
  </div>
</footer>
</div>

<script>
/* attribute rows: area, id, length, shape area */
const data = `48,96908 3064 2911,146019 489690,80105
31,633737 4042 2700,238623 316337,37325
31,595073 4045 2681,183009 315950,72545
85,35553 4055 4749,457118 853555,3012
92,813672 4058 5054,930243 928136,721
61,849832 4068 5419,860643 618498,32405
27,10433 4097 2320,473673 271043,3011
31,684788 4124 2626,015721 316847,884
45,33451 4138 2888,201367 453345,09875
36,637 4144 2909,602965 366370,00385
150,180139 4161 7228,600802 1501801,39235
44,698814 4169 2929,496415 446988,13595
99,078193 4193 4918,367204 990781,92585
78,766124 4194 5415,797319 787661,23895
105,551336 4216 7553,556648 1055513,3647
35,133024 4223 2723,053803 351330,23825
543,200638 4225 11516,186684 5432006,3793
44,087595 4238 2520,61174 440875,9484
25,955628 4257 2001,808401 259556,2781
55,715347 4261 4866,148338 557153,4653
123,321385 4266 6480,012893 1233213,8458
45,321273 4267 2857,756929 453212,73165
27,213407 4270 2328,817979 272134,0705
86,187018 4280 5449,095995 861870,18035
149,755401 4284 6575,697009 1497554,0116
35,809103 4288 2694,109863 358091,0254
39,332194 4301 2615,470074 393321,9398
60,80673 4303 3610,469437 608067,29695
80,979395 4308 5315,705031 809793,94765
50,60267 4309 3241,592851 506026,70405
39,421843 4311 2457,566463 394218,42665
115,201765 4317 6432,135522 1152017,65415
165,287197 4321 7619,162856 1652871,97365
40,763428 4329 2583,666873 407634,2824
35,614207 4330 4303,001495 356142,06785
28,34824 4338 2669,00096 283482,40105
129,87179 4339 7982,104721 1298717,898
41,878053 4346 2618,429646 418780,53065
50,305873 4349 3373,138903 503058,7266
29,615324 4360 2375,200191 296153,24105
33,776438 4363 2796,547633 337764,3814
28,637234 4366 3005,049131 286372,33985
26,444544 4371 2173,147844 264445,4413
60,429095 4378 3645,38033 604290,94865
29,735869 4388 2257,113278 297358,6901`.split("\n").map(l => l.split(" "));
document.getElementById("rows").innerHTML = data.map((r, i) =>
  `<tr${i ? "" : ' class="current"'}><th class="rowhead"></th><td class="numcell">${i}</td><td>Polygon ZM</td><td>${i ? 112 : 111}</td><td></td><td class="numcell">${r[0]}</td><td>EU-142${r[1]}</td><td class="numcell">${r[2]}</td><td class="numcell">${r[3]}</td></tr>`).join("");

/* layer tree: name, ticked, swatch colour, chosen */
const layers = [["a",0,"line"],["corine",1,"#d5d8f7",1],["merkez",1,"#f3cfc8"],["goller",1,"#d3f0c0"],["f",0,"#b5d6f2"],["yol",1,"#f3cfc2"],["dem",0,null],["yukselti",0,"ramp"]];
document.getElementById("tree").innerHTML += layers.map(([n, on, sw, sel]) => {
  const row = `<div class="tree-row child d-flex align-items-center"><button class="fold" aria-label="Expand ${n}"><svg width="5" height="5"><path d="M0 2.5h5${sw ? "" : "M2.5 0v5"}" stroke="currentColor"/></svg></button><input class="tick" type="checkbox" aria-label="${n}" ${on ? "checked" : ""}><span class="layer-name ${sel ? "chosen" : ""}">${n}</span></div>`;
  if (!sw) return row;
  if (sw === "ramp") return row + '<div class="ramp mt-3"></div>';
  if (sw === "line") return row + '<div class="tree-row swatch-row d-flex align-items-center"><svg width="10" height="2"><path d="M0 1h10" stroke="#557" /></svg></div>';
  return row + `<div class="tree-row swatch-row d-flex align-items-center"><span class="swatch" style="background:${sw}"></span></div>`;
}).join("");

/* tool bars */
const T = (id, c = "") => `<button class="tl ${c}" aria-label="${id}"><svg class="${c.includes("dim") ? "faded" : ""}" width="17" height="17"><use href="#${id}"/></svg></button>`;
const dim = id => T(id, "dim");
const S = '<span class="divider"></span>', C = '<span class="caret"></span>', G = '<span class="gripper"></span>';
const M = (c = "") => `<button class="more ${c}" aria-label="Toolbar options"><svg width="8" height="8"><use href="#moreg"/></svg></button>`;
const L = t => `<a class="menulink" href="#">${t}</a>`;
const tag = extra => `<button class="tl" aria-label="Labels"><svg width="18" height="18" viewBox="0 0 18 18"><use href="#tag" width="15" height="15"/>${extra}</svg></button>`;
const rows = [
  `<select class="greybox layerpick border-0" disabled aria-label="Layer"><option></option></select>` + ["vert","vertw","verth","vertz","vertx","winz","wint","rot"].map(dim).join("") + C + `<input class="anglebox border border-secondary bg-white" aria-label="Angle">` + M("ms-2"),
  `<span class="border border-dark border-start-0 d-flex">${C}</span>` + ["contour","steep","sight","pin3d","line3d","poly3d"].map(i => T(i)).join("") + S + T("chart") + C + S + T("earth") + S + T("scene") + M("ms-1") + `<span class="ms-2"></span>` + G + T("arrh", "on") + T("arrp") + T("arrm") + S + T("pencil") + S + T("bbox") + dim("topo") + S + T("sketch") + M("ms-1"),
  M() + G + L("Editor") + `<span class="ms-1"></span>` + S + T("arr", "on") + dim("arra") + S + dim("seg") + dim("arc") + dim("polyp") + C + dim("burst") + S + ["resh","splitp","cut","splitl","rotb"].map(i => T(i)).join("") + S + T("attrt") + T("sketch") + S + T("cfeat") + M("ms-1"),
  `<span class="rasterbox bg-white align-self-stretch"></span>${C}<label class="mx-1" for="cell">Cell Size:</label><div class="bg-white d-flex align-items-center"><select id="cell" class="cellpick border-0 bg-white p-0 ps-1"><option>Screen</option></select>${C}</div>` + M("ms-1") + `<span class="ms-2"></span>` + G + L("Labeling") + `<span class="ms-1"></span>` +
    tag('<path d="M8 8h9v9H8z" fill="#eaf4ff" stroke="#2b6ca8"/><path d="M8 9h9" stroke="#2b6ca8" stroke-width="2"/><path d="M10 12h5M10 15h5" stroke="#2b6ca8"/>') + tag('<path d="M10 17V8M8 10l2-3 2 3M15 8v9M13 15l2 2 2-2" stroke="#2b6ca8" stroke-width="1.3" fill="none"/>') + tag('<path d="M9 10q4-5 8 0v4q-4 5-8 0z" fill="#bd2d26"/>') + tag('<path d="M8 10h9v7H8z" fill="#e5b53b" stroke="#876015"/><path d="M10 10V7q2-3 5 0v3" fill="none" stroke="#777" stroke-width="1.5"/>') + tag('<path d="M11 8v9M15 8v9" stroke="#2b6ca8" stroke-width="2"/>') + tag('<path d="M9 9l8 8M17 9l-8 8" stroke="#d62b2b" stroke-width="2.5"/>') + S +
    `<select class="greybox fastpick border border-secondary-subtle" disabled aria-label="Placement quality"><option>Fast</option></select>` + M("ms-1"),
  `<a class="menulink me-1" href="#">7</a>${S}<div class="basemaps d-flex ms-1">` + ["OpenStreetMap","Bing","Stamen","MapBox","CartoDB","MapQuest","Strava"].map(L).join("") + "</div>" + M("ms-1")
];
document.getElementById("bars").innerHTML = rows.map(r => `<div class="barrow d-flex align-items-center">${r}</div>`).join("");

/* map, drawn at three units per pixel */
const outline = "M3 311L38 311 55 298 68 262 82 240 140 247 185 258 215 255 240 245 262 230Q280 212 298 228L301 262 320 263 350 256 390 263 430 259 478 240 515 240 545 238 560 226 560 213 545 190 518 158 540 140 585 130 592 115 570 110 550 112 536 98 536 55 545 47 565 47 585 65 618 79 650 60 690 38 730 27 770 29 797 33 822 42 850 65 868 85 870 128 910 142 960 155 1005 154 1030 163 1045 185 1070 180 1125 170 1165 165 1185 172 1225 160 1270 168 1290 167 1310 185 1310 205 1290 215 1292 245 1310 275 1335 305 1345 345 1370 385 1395 393 1420 400 1424 425 1405 440 1388 450 1385 480 1410 490 1450 515 1485 530 1482 560 1491 600 1480 625 1487 635 1475 670 1475 690 1440 720 1400 755 1378 798 1365 800 1330 785 1270 770 1250 785 1245 830 1238 875 1210 912 1180 920 1150 950 1105 975 1100 990 1060 1005 1010 1025 970 1032 890 1026 862 1024 835 1045 815 1095 830 1130 820 1145 775 1180 755 1200 735 1250 700 1242 670 1232 620 1222 560 1190 500 1183 465 1187 450 1195 438 1180 437 1145 415 1142 405 1130 405 1100 370 1075 337 1050 355 1035 365 1010 368 980 350 977 345 962 328 965 325 935 310 922 270 920 235 907 190 890 135 877 125 860 90 845 60 820 38 817 20 785 3 778Z";
const borders = ["M478 240V275Q462 295 445 300L408 303Q390 330 405 355 420 385 410 420 395 460 403 505 430 540 428 560 445 575 440 603L480 628 500 660 540 672 545 710","M560 213Q590 180 630 193 700 200 735 175 775 160 768 125 760 100 780 80 795 65 792 35","M668 195Q675 230 720 270 730 300 745 308 800 320 820 365 828 395 850 390L880 365 957 356 980 340","M975 340Q970 300 1000 292 1060 275 1083 260 1090 210 1070 180","M958 357Q965 385 930 410 900 470 850 480 790 495 797 540 800 565 830 575 870 580 872 605 900 630 957 620V560Q965 500 960 470","M1059 330V370Q1050 390 1045 405 1020 425 1005 430","M980 340L1030 343 1060 328 1085 325 1105 350Q1140 365 1160 345 1190 325 1230 325L1300 322 1340 312","M3 520Q40 495 85 500 100 530 125 545 140 570 105 576 70 580 75 605 85 625 113 620 130 600 170 598 200 605 240 606 280 640 325 675 370 730 410 745 440 757 470 752 520 740 545 713 565 690 570 675 610 665 660 690 690 690 705 660 690 645 665 642 650 635 650 625 690 610 740 580 790 565 850 585 880 607","M113 620L105 658 60 665 3 707","M440 757Q415 790 380 825 350 850 310 865 270 890 260 905 235 907","M380 825Q400 845 398 880 405 920 440 940 470 955 498 950 515 1010 495 1040 480 1100 472 1130 450 1140 430 1143","M520 735Q545 760 535 825 570 835 610 840 650 860 670 885 700 888 722 875L712 840Q715 810 740 812 755 815 757 860 780 890 840 886 865 880 880 868","M957 620Q1000 635 1025 655 1030 690 985 640","M975 635Q1000 640 1025 650 1040 685 1000 700 990 720 1030 722L1060 715Q1100 705 1165 688L1185 707 1230 716 1300 710 1340 720 1400 755","M1028 722Q1030 750 980 757L895 757Q860 780 880 868 905 870 925 905 950 950 975 965 985 990 975 1032","M803 886L803 940Q830 980 858 1000L862 1024","M810 512Q790 520 798 545"];
const dots = "550 53 699 66 666 91 668 139 572 132 773 104 800 178 808 65 181 273 84 278 274 274 246 303 347 306 414 289 80 334 257 356 364 334 595 242 541 261 568 266 620 293 679 265 734 258 738 299 530 326 597 329 774 335 431 353 461 371 551 376 597 386 618 357 651 374 683 371 705 381 663 400 620 406 494 407 741 415 808 420 472 452 503 462 601 476 656 475 690 480 665 501 715 489 775 457 733 442 690 437 561 510 600 514 618 545 673 543 739 541 562 559 594 585 610 604 658 576 683 568 676 603 456 575 480 505 515 497 375 499 389 427 307 457 283 549 240 541 195 550 158 537 129 507 138 477 103 469 76 467 22 477 56 438 39 419 14 402 138 417 32 546 40 598 148 575 203 584 260 612 307 616 362 617 160 631 208 651 98 650 4 563 580 629 555 654 625 652 670 652 708 652 767 624 739 640 801 610 801 565 666 628 206 651 28 706 112 699 165 676 177 699 201 681 59 745 126 755 90 788 97 824 153 810 196 812 205 752 301 766 349 776 366 785 365 810 322 725 402 702 411 668 456 695 417 774 476 768 523 800 555 811 510 844 582 685 607 712 638 698 680 695 740 686 762 679 608 789 638 795 683 837 708 870 737 839 727 727 801 748 801 657 357 859 325 896 216 890 349 945 585 901 619 930 571 953 663 914 683 901 654 967 583 1017 541 1063 642 1065 448 1100 482 1007 397 1007 697 1136 766 1132 583 1159 622 1153 516 1133 752 1077 768 968 953 183 993 183 1003 219 955 246 845 324 1112 210 1175 212 1252 254 1110 275 1195 304 1034 304 1129 326 1072 363 1111 370 1178 377 1154 391 1280 283 1306 296 1359 393 1396 412 1358 458 1310 452 1235 441 1181 441 1147 463 1084 434 958 406 1002 403 1048 422 969 436 890 384 872 407 805 420 842 455 860 472 814 462 866 533 930 528 893 581 931 590 986 551 1010 518 1082 551 1067 570 1137 563 1212 553 1190 510 1410 525 1031 600 988 635 864 614 801 567 801 610 991 662 850 670 826 658 914 690 966 680 1014 703 1088 729 1133 720 855 740 930 747 803 747 900 779 852 788 926 803 846 815 937 820 1002 819 1026 827 849 865 944 897 1009 920 978 950 1034 944 897 939 1123 892 1173 872 1018 733".split(" ").map(Number);
let small = "";
for (let i = 0; i < dots.length; i += 2) {
  const x = dots[i], y = dots[i + 1], k = i / 2 % 5;
  small += `M${x - 4} ${y - 2 + k % 2}l4-${2 + k % 3} 4 2 ${k % 2 ? 1 : -1} 5-5 ${k > 2 ? 2 : 1}z`;
}
const clusters = "M66 548l14 6 10-10 8 10 0 8-20 2-16-4zM295 395l14-2 10 4zM324 394l12-2 22 4-18 4zM447 630l24-5-8 8-18 4zM672 428l12 0 4 10-14 2zM612 460l16-4-4 16-10-6zM505 496l16 4-12 3zM160 728l14-2 4 16-16-2zM170 845l18-2 0 12-18 0zM224 840l12 0 2 12-14 2zM444 900l10-4 6 10-6 12-10-8zM524 892l14 2 2 14-14-2zM390 1000l16 4-6 12-10-6zM570 1018l20-6-8 12zM588 1068l14 0-2 12-10 0zM508 1126l16 4-4 14-10-6zM740 1085l6 8-4 16 4 6M674 990l22-4M758 972l18-6-6 10zM1046 242l24-6-6 8zM1140 268l16-8-8 16zM905 212l26-2-14 18zM957 330l10 0 8 6-14 2M1280 470l34 4-14 5-14-6M1196 467l60-1-26 5M1370 490l22 2-10 4zM874 546l14-2 2 14-10 4-7-8zM1207 572l12 4 8-8 8 6 10 0-2 14-16 2-4-8-16 8zM1002 915l18 6-14 6zM873 976l16-2-10 16zM958 675l12 0 2 10-12 0zM1126 717l10 0 0 8-12 0zM940 892l12 6-8 4z";
document.getElementById("map").innerHTML = `
<g stroke="#8d7572" stroke-width="3" stroke-linejoin="round"><path d="${outline}" fill="#f3d1c8"/>${borders.map(b => `<path d="${b}" fill="none"/>`).join("")}</g>
<g fill="none" stroke="#7d6060" stroke-width="2.5"><path d="${small}" fill="#a98f92"/><path d="${clusters}" fill="#a4a3b5"/>
<path d="M240 490l16-4 0 10-12 2zM253 490l35-10 50-18M345 462l60 3 30-3 20-11M1107 481l25 0 50-13M1235 322l14-4 6 6 20 2 6-8 12 8 20-7 20 0" stroke-width="4"/></g>
<g fill="#cbd9f6" stroke="#6d6e83" stroke-width="2.5" stroke-linejoin="round">
<path d="M200 432l24-12 12 2 0 8 22-4-4 6-18 2-14 6-16 0-12 14-4-10z"/><path d="M172 422l16-2 4 4zM182 452l10-4 6 8-10 2z"/>
<path d="M532 439l14 0 12-8 6-8 18 2 8-4 11 10-2 8 4 8-14 8-10-2-12 6-10-4-14 8 2-10-2-8z"/>
<path d="M950 462l16-4 6 4 8-10 2-10-4-4 10-8 4-12 4 4-2 12 14 4-8 4 6 8 8 6 10-6 4 8 16-4-4 10 10 2-10 6 4 10-12-6 4 16-12-4-10-14-16-2-14 10-10-6-20 6 4-12-10-4 6-4z"/>
<path d="M730 727l14-2 6-4 6 8 12 6 2 10-10-2-6 4-6-8-12 2z"/><path d="M612 1030l12-10 18-2 4 12-10 10-14 4z"/><path d="M852 196l14-5 22 4 0 8-22 3z"/></g>
<path d="M530 478v38l9-8 7 14 5-3-5-12 12 0z" fill="#000" stroke="#fff" stroke-width="1.5"/>`;
</script>
<script src="https://cdn.jsdelivr.net/npm/bootstrap@5.3.0/dist/js/bootstrap.bundle.min.js"></script>
</body>
</html>
